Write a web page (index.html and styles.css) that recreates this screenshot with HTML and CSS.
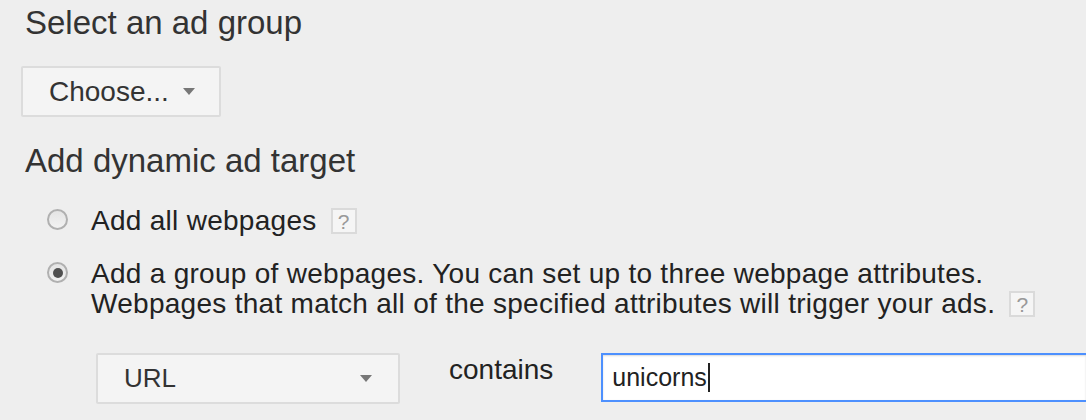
FILE: index.html
```html
<!DOCTYPE html>
<html lang="en">
<head>
    <meta charset="UTF-8">
    <title>Dynamic ad target</title>
    <link rel="stylesheet" href="styles.css">
</head>
<body>
    <div class="panel">
        <h2 class="section-title">Select an ad group</h2>
        <button class="dropdown choose">Choose... <span class="arrow"></span></button>

        <h2 class="section-title target-title">Add dynamic ad target</h2>
        <div class="option first">
            <span class="radio"></span>
            <div class="option-text">Add all webpages <span class="help">?</span></div>
        </div>
        <div class="option">
            <span class="radio checked"></span>
            <div class="option-text">Add a group of webpages. You can set up to three webpage attributes.<br>
                Webpages that match all of the specified attributes will trigger your ads. <span class="help">?</span></div>
        </div>

        <div class="rule-row">
            <button class="dropdown url-select"><span>URL</span><span class="arrow"></span></button>
            <span class="rule-op">contains</span>
            <div class="rule-input">unicorns<span class="caret"></span></div>
        </div>
    </div>
</body>
</html>
```

FILE: styles.css
```css
body {
    margin: 0;
    background: #eeeeee;
    font-family: "Liberation Sans", Arial, sans-serif;
    color: #222;
    overflow: hidden;
}
.panel {
    padding: 3px 0 0 25px;
}
.section-title {
    font-size: 33px;
    font-weight: normal;
    color: #333;
    margin: 0;
    line-height: 40px;
}
.dropdown {
    display: flex;
    align-items: center;
    background: #f4f4f4;
    border: 2px solid #dcdcdc;
    border-radius: 2px;
    font-family: inherit;
    color: #333;
    font-size: 28px;
    padding: 0;
    box-sizing: border-box;
}
.arrow {
    display: inline-block;
    width: 0;
    height: 0;
    border-left: 6.5px solid transparent;
    border-right: 6.5px solid transparent;
    border-top: 7px solid #777;
}
.choose {
    margin: 23px 0 0 -4px;
    width: 200px;
    height: 51px;
    padding-left: 26px;
    gap: 14px;
}
.target-title {
    margin-top: 24px;
}
.option {
    display: flex;
    align-items: flex-start;
    margin: 23px 0 0 22px;
    font-size: 28px;
    line-height: 30px;
    letter-spacing: 0.28px;
}
.option.first {
    margin-top: 25px;
}
.radio {
    width: 17px;
    height: 17px;
    border: 2px solid #b0b0b0;
    border-radius: 50%;
    background: linear-gradient(#e4e4e4, #f2f2f2);
    margin: 3px 23px 0 0;
    flex: none;
    position: relative;
}
.checked::after {
    content: "";
    position: absolute;
    left: 3.5px;
    top: 3.5px;
    width: 10px;
    height: 10px;
    border-radius: 50%;
    background: #505050;
}
.help {
    display: inline-block;
    width: 22px;
    height: 22px;
    border: 2px solid #dadada;
    background: #f5f5f5;
    color: #999;
    font-size: 21px;
    line-height: 23px;
    text-align: center;
    margin-left: 6px;
    letter-spacing: 0;
    vertical-align: 1px;
}
.rule-row {
    display: flex;
    align-items: flex-start;
    margin: 34px 0 0 71px;
}
.url-select {
    width: 304px;
    height: 51px;
    justify-content: space-between;
    padding: 0 26px 0 26px;
    font-size: 26px;
}
.rule-op {
    font-size: 28px;
    line-height: 32px;
    color: #222;
    margin: 1px 0 0 49px;
}
.rule-input {
    margin-left: 48px;
    flex: 1;
    height: 49px;
    box-sizing: border-box;
    border: 2px solid #4d90fe;
    border-right: none;
    background: #fff;
    box-shadow: inset 0 1px 2px rgba(0, 0, 0, 0.15);
    font-size: 25px;
    line-height: 45px;
    padding-left: 9px;
    color: #222;
}
.caret {
    display: inline-block;
    width: 2px;
    height: 29px;
    background: #222;
    vertical-align: -6px;
    margin-left: 1px;
}
```
